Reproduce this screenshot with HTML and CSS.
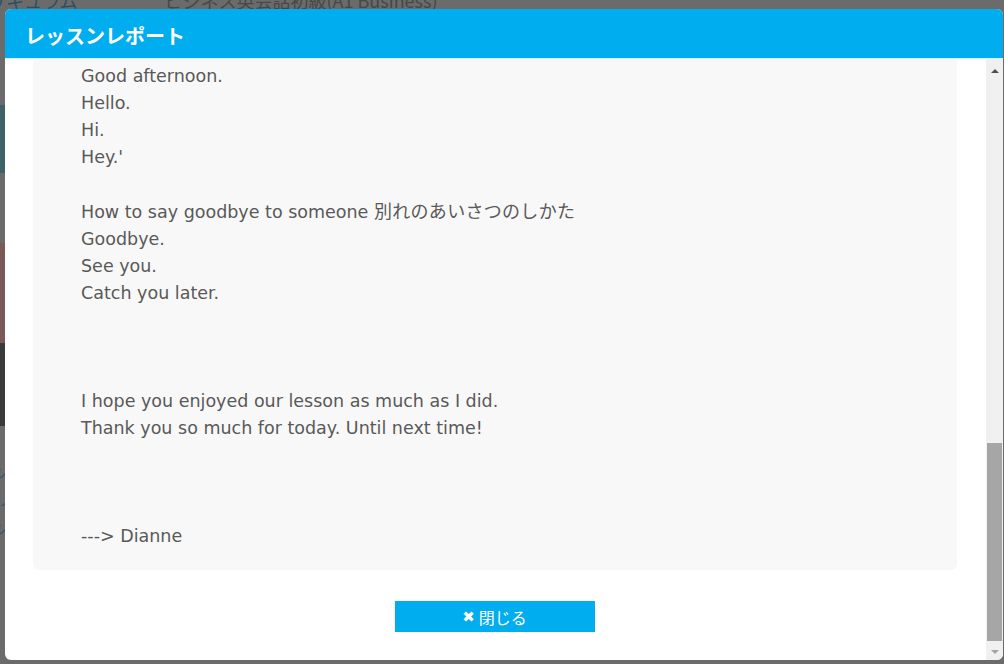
FILE: index.html
```html
<!DOCTYPE html>
<html lang="ja">
<head>
    <meta charset="UTF-8">
    <meta name="viewport" content="width=device-width, initial-scale=1.0">
    <title>レッスンレポート</title>
    <link rel="stylesheet" href="styles.css">
</head>
<body>
    <!-- page behind the dialog -->
    <div class="page">
        <div class="page-head">
            <span class="page-label">カリキュラム</span>
            <span class="page-course">ビジネス英会話初級(A1 Business)</span>
        </div>
        <div class="page-band teal"></div>
        <div class="page-band photo"></div>
        <div class="page-band dark"></div>
        <div class="page-links">
            <span>ソ</span>
            <span>リ</span>
            <span>ソ</span>
        </div>
    </div>

    <div class="modal">
        <div class="modal-header">
            <h1>レッスンレポート</h1>
        </div>
        <div class="modal-body">
            <div class="modal-scroll">
                <div class="report">
                    <p>Hi! Thank you for joining my class today.</p>
                    <p>&nbsp;</p>
                    <p>Today we practiced greetings and farewells.</p>
                    <p>&nbsp;</p>
                    <p>How to greet someone <span class="ja">あいさつのしかた</span></p>
                    <p>'Good morning.</p>
                    <p>Good afternoon.</p>
                    <p>Hello.</p>
                    <p>Hi.</p>
                    <p>Hey.'</p>
                    <p>&nbsp;</p>
                    <p>How to say goodbye to someone <span class="ja">別れのあいさつのしかた</span></p>
                    <p>Goodbye.</p>
                    <p>See you.</p>
                    <p>Catch you later.</p>
                    <p>&nbsp;</p>
                    <p>&nbsp;</p>
                    <p>&nbsp;</p>
                    <p>I hope you enjoyed our lesson as much as I did.</p>
                    <p>Thank you so much for today. Until next time!</p>
                    <p>&nbsp;</p>
                    <p>&nbsp;</p>
                    <p>&nbsp;</p>
                    <p>---&gt; Dianne</p>
                </div>
                <div class="modal-footer">
                    <button type="button" class="btn-close"><span class="x">✖</span>閉じる</button>
                </div>
            </div>
            <div class="scrollbar">
                <div class="sb-btn"><span class="arrow-up"></span></div>
                <div class="sb-track"><div class="sb-thumb"></div></div>
                <div class="sb-btn"><span class="arrow-down"></span></div>
            </div>
        </div>
    </div>
</body>
</html>
```

FILE: styles.css
```css
body {
    margin: 0;
    width: 1004px;
    height: 664px;
    overflow: hidden;
    background-color: #6b6b6b;
    font-family: "DejaVu Sans", "Noto Sans CJK JP", sans-serif;
    position: relative;
}

/* page behind the overlay */
.page {
    display: flex;
    flex-direction: column;
    height: 100%;
    color: #3f3f3f;
    font-family: "Noto Sans CJK JP", sans-serif;
}

.page-head {
    display: flex;
    gap: 87px;
    margin-top: -13px;
    font-size: 18px;
    line-height: 26px;
}

.page-label {
    color: #2d4f63;
    margin-left: -30px;
}

.page-course {
    color: #474747;
}

.page-band {
    width: 40px;
}

.page-band.teal {
    margin-top: 92px;
    height: 68px;
    background-color: #3f6168;
}

.page-band.photo {
    margin-top: 70px;
    height: 100px;
    background-color: #7b5a55;
}

.page-band.dark {
    height: 83px;
    background-color: #3a3a3a;
}

.page-links {
    display: flex;
    flex-direction: column;
    margin-top: 30px;
    margin-left: -6px;
    color: #3d5b70;
    font-size: 18px;
    line-height: 28px;
}

/* dialog */
.modal {
    position: absolute;
    top: 9px;
    left: 5px;
    width: 998px;
    height: 651px;
    background-color: #fff;
    border-radius: 6px;
    overflow: hidden;
    display: flex;
    flex-direction: column;
}

.modal-header {
    height: 49px;
    background-color: #00aeef;
    border-bottom: 1px solid #d5f1fc;
    display: flex;
    align-items: center;
    padding-left: 20px;
}

.modal-header h1 {
    margin: 0;
    color: #fff;
    font-family: "Noto Sans CJK JP", sans-serif;
    font-size: 20px;
    font-weight: bold;
    padding-top: 3px;
}

.modal-body {
    flex: 1;
    display: flex;
    min-height: 0;
}

.modal-scroll {
    flex: 1;
    display: flex;
    flex-direction: column;
    justify-content: flex-end;
    overflow: hidden;
}

.report {
    margin: 0 29px 0 28px;
    padding: 20px 20px 20px 48px;
    background-color: #f8f8f8;
    border-radius: 6px;
    color: #595959;
    font-size: 17.5px;
    line-height: 27px;
}

.report p {
    margin: 0;
    white-space: nowrap;
}

.report .ja {
    font-size: 18px;
    letter-spacing: 0.3px;
}

.modal-footer {
    display: flex;
    justify-content: center;
    padding: 31px 0 28px;
}

.btn-close {
    width: 200px;
    height: 31px;
    border: none;
    background-color: #00aeef;
    color: #fff;
    font-family: "Noto Sans CJK JP", sans-serif;
    font-size: 16px;
    display: flex;
    align-items: center;
    justify-content: center;
    gap: 4px;
    padding: 0;
    margin-left: -2px;
}

.btn-close .x {
    font-family: "DejaVu Sans", sans-serif;
    font-size: 15px;
}

/* fake scrollbar */
.scrollbar {
    width: 17px;
    background-color: #f0f0f0;
    display: flex;
    flex-direction: column;
}

.sb-btn {
    height: 17px;
    display: flex;
    align-items: center;
    justify-content: center;
}

.sb-btn:first-child {
    padding-top: 3px;
}

.arrow-up {
    border-left: 4px solid transparent;
    border-right: 4px solid transparent;
    border-bottom: 4px solid #505050;
}

.arrow-down {
    border-left: 4px solid transparent;
    border-right: 4px solid transparent;
    border-top: 4px solid #a3a3a3;
}

.sb-track {
    flex: 1;
    display: flex;
    flex-direction: column;
    justify-content: flex-end;
    align-items: center;
}

.sb-thumb {
    width: 15px;
    height: 198px;
    margin-bottom: 2px;
    background-color: #a6a6a6;
}
```
